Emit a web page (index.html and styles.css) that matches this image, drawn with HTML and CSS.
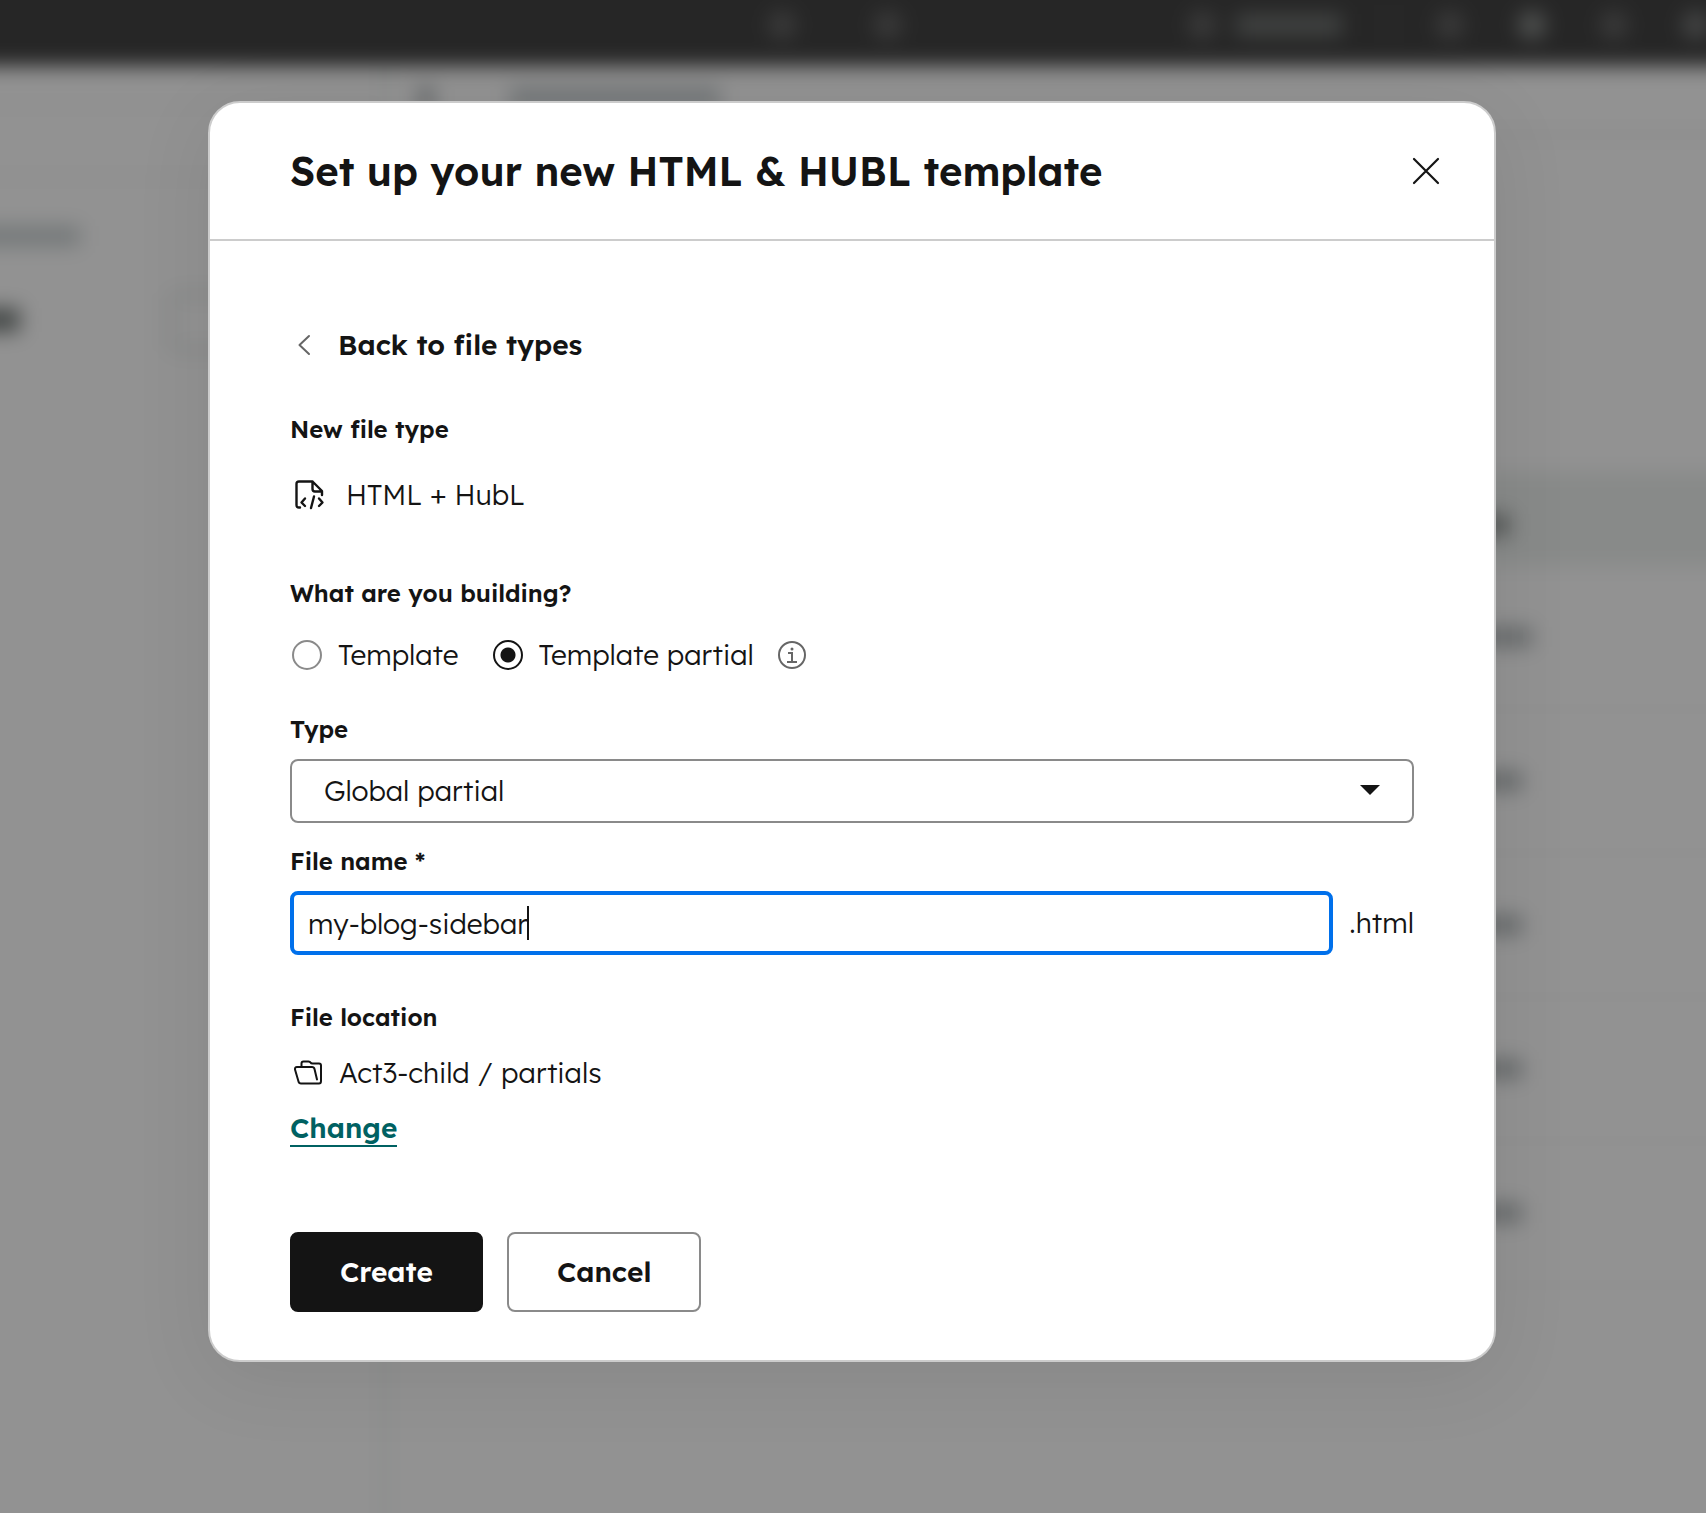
FILE: index.html
```
<!DOCTYPE html>
<html lang="en">
<head>
    <meta charset="UTF-8">
    <meta name="viewport" content="width=device-width, initial-scale=1.0">
    <title>Set up your new HTML &amp; HUBL template</title>
    <link rel="stylesheet" href="styles.css">
</head>

<body>
    <!-- design manager behind the dialog -->
    <div class="app" aria-hidden="true">
        <div class="topbar">
            <i class="dot dim search"></i>
            <i class="dot dim"></i>
            <i class="dot dim account"></i>
            <i class="bar"></i>
            <i class="divider"></i>
            <i class="dot dim"></i>
            <i class="dot light"></i>
            <i class="dot dim"></i>
            <i class="dot"></i>
        </div>
        <div class="workspace">
            <div class="sidebar">
                <div class="side-row"></div>
                <div class="side-row"></div>
                <div class="side-link"><i></i></div>
                <div class="side-title"><i></i><b></b></div>
            </div>
            <div class="main">
                <div class="tabs"><i></i><b></b></div>
                <div class="table">
                    <div class="row head"><i></i></div>
                    <div class="row first"><i></i></div>
                    <div class="row"><i></i></div>
                    <div class="row"><i></i></div>
                    <div class="row"><i></i></div>
                    <div class="row"><i></i></div>
                </div>
            </div>
        </div>
    </div>

    <div class="overlay">
        <div class="modal" role="dialog" aria-labelledby="modalTitle">
            <div class="modal-header">
                <h1 id="modalTitle">Set up your new HTML &amp; HUBL template</h1>
                <button type="button" class="close" aria-label="Close">
                    <svg width="28" height="28" viewBox="0 0 28 28" fill="none" stroke="#141414" stroke-width="2.2" stroke-linecap="round">
                        <path d="M2 2l24 24M26 2L2 26"/>
                    </svg>
                </button>
            </div>

            <form class="modal-body" onsubmit="return false">
                <button type="button" class="back">
                    <svg width="28" height="28" viewBox="0 0 28 28" fill="none" stroke="#666" stroke-width="2" stroke-linecap="round" stroke-linejoin="round">
                        <path d="M19 5L9.500 14L19 23"/>
                    </svg>
                    Back to file types
                </button>

                <h2 class="label">New file type</h2>
                <div class="file-type">
                    <svg width="32" height="32" viewBox="0 0 32 32" fill="none" stroke="#141414" stroke-width="2.400" stroke-linecap="round" stroke-linejoin="round">
                        <path d="M6 28.500H5Q2.500 28.500 2.500 26V5Q2.500 2.500 5 2.500H18.500L28 12V16M18.500 2.500V10Q18.500 12.500 21 12.500H28"/>
                        <path d="M11 19.500L7.500 23.500L11 27M20 17.500L17 29M25 19.500L28.500 23.500L25 27"/>
                    </svg>
                    HTML + HubL
                </div>

                <fieldset>
                    <legend class="label">What are you building?</legend>
                    <div class="radios">
                        <label><input type="radio" name="building" value="template"> Template</label>
                        <label><input type="radio" name="building" value="partial" checked> Template partial</label>
                        <svg class="info" width="28" height="28" viewBox="0 0 28 28" fill="none" stroke="#666" stroke-width="2">
                            <circle cx="14" cy="14" r="13"/>
                            <path d="M10 12H14V21M9 21H19"/>
                            <circle cx="14" cy="8" r="1.500" fill="#666" stroke="none"/>
                        </svg>
                    </div>
                </fieldset>

                <label class="label" for="type">Type</label>
                <div class="select">
                    <select id="type">
                        <option>Global partial</option>
                    </select>
                    <svg width="20" height="10" viewBox="0 0 20 10"><path d="M0 0H20L10 10Z" fill="#141414"/></svg>
                </div>

                <label class="label" for="fileName">File name *</label>
                <div class="file-name">
                    <div class="field">
                        <input type="text" id="fileName" value="my-blog-sidebar">
                        <span class="caret"></span>
                    </div>
                    <span>.html</span>
                </div>

                <h2 class="label location">File location</h2>
                <div class="path">
                    <svg width="29" height="28" viewBox="0 0 29 28" fill="none" stroke="#141414" stroke-width="2" stroke-linecap="round" stroke-linejoin="round">
                        <path d="M7.500 8V4.500Q7.500 2.500 9.500 2.500H14.500Q16 2.500 16.500 3.500T18.500 4.500H25Q27 4.500 27 6.500V22Q27 24.500 25 24.500H7Q5 24.500 4.500 22.500L1 10.500Q0.800 8 3 8H18Q20 8 20.500 10L23 20.500"/>
                    </svg>
                    Act3-child / partials
                </div>
                <a href="#" class="change">Change</a>

                <div class="buttons">
                    <button type="submit" class="btn primary">Create</button>
                    <button type="button" class="btn">Cancel</button>
                </div>
            </form>
        </div>
    </div>
</body>
</html>
```
FILE: styles.css
```
* {
    box-sizing: border-box;
}

body {
    margin: 0;
    min-height: 100vh;
    position: relative;
    overflow-x: hidden;
    background: #929292;
    color: #141414;
    font-family: Lexend, Inter, sans-serif;
    font-feature-settings: "cv11";
    font-size: 28px;
    font-weight: 300;
    line-height: 40px;
}

h1, h2, fieldset, legend {
    margin: 0;
    padding: 0;
    border: 0;
}

svg {
    display: block;
    flex: none;
}

button, input, select {
    font: inherit;
    font-feature-settings: inherit;
    color: inherit;
}

/* page behind the dialog */
.app {
    position: absolute;
    inset: 0;
    overflow: hidden;
    filter: blur(10px);
    margin: -40px;
    background: linear-gradient(#262626 106px, #929292 106px);
}

.topbar {
    height: 106px;
    padding: 40px 36px 16px 0;
    display: flex;
    align-items: center;
    justify-content: flex-end;
    gap: 54px;
}

.dot {
    width: 28px;
    height: 28px;
    border-radius: 50%;
    background: #454646;
    flex: none;
}

.dot.dim {
    background: #3b3b3b;
}

.dot.light {
    background: #505251;
}

.dot.search {
    margin-right: 24px;
}

.dot.account {
    margin: 0 -34px 0 232px;
}

.bar {
    width: 106px;
    height: 22px;
    background: #414342;
}

.divider {
    width: 2px;
    height: 40px;
    margin: 0 -8px 0 -8px;
    background: #393939;
}

.workspace {
    display: grid;
    grid-template-columns: 426px 1fr;
    min-height: 100%;
}

.sidebar {
    border-right: 3px solid #828584;
}

.side-row {
    height: 40px;
    border-bottom: 2px solid #868686;
}

.side-row + .side-row {
    height: 72px;
}

.side-link {
    padding: 48px 0 46px;
}

.side-link i {
    display: block;
    width: 120px;
    height: 20px;
    background: #747879;
}

.side-title {
    display: flex;
    justify-content: space-between;
}

.side-title i {
    width: 60px;
    height: 24px;
    margin-top: 16px;
    background: #454948;
}

.side-title b {
    width: 214px;
    height: 60px;
    border: 4px solid #7c807f;
    border-radius: 8px;
}

.tabs {
    height: 70px;
    padding: 22px 32px;
    display: flex;
    gap: 76px;
    border-bottom: 3px solid #848484;
}

.tabs i {
    width: 16px;
    height: 20px;
    background: #606466;
}

.tabs b {
    width: 210px;
    height: 20px;
    background: #707476;
}

.table {
    margin-top: 336px;
}

.row {
    height: 144px;
    padding-left: 1042px;
    display: flex;
    align-items: center;
    border-bottom: 2px solid #8b8b8b;
}

.row i {
    width: 94px;
    height: 20px;
    background: #686b6c;
}

.row.first i {
    width: 104px;
}

.row.head {
    height: 94px;
    background: #888a89;
    border: 0;
}

.row.head i {
    width: 82px;
    height: 22px;
    margin-top: 12px;
    background: #555857;
}

/* dialog */
.overlay {
    position: relative;
    padding: 101px 210px 152px 208px;
}

.modal {
    background: #fff;
    border: 2px solid #ccc;
    border-radius: 32px;
    box-shadow: 0 16px 80px rgba(0, 0, 0, 0.08);
}

.modal-header {
    height: 138px;
    padding: 0 54px 0 80px;
    display: flex;
    align-items: center;
    justify-content: space-between;
    border-bottom: 2px solid #ccc;
}

h1 {
    font-size: 40px;
    font-weight: 600;
    line-height: 48px;
}

.close {
    padding: 0;
    border: 0;
    background: none;
}

.modal-body {
    padding: 84px 80px 48px;
}

.back {
    display: flex;
    align-items: center;
    gap: 20px;
    margin-bottom: 46px;
    padding: 0;
    border: 0;
    background: none;
    font-weight: 600;
}

.label {
    display: block;
    font-size: 24px;
    font-weight: 600;
    line-height: 36px;
}

.file-type {
    display: flex;
    align-items: center;
    gap: 20px;
    padding-left: 4px;
    margin: 28px 0 60px;
}

.radios {
    display: flex;
    align-items: center;
    margin: 24px 0 36px;
}

.radios label {
    display: flex;
    align-items: center;
    gap: 16px;
    margin-right: 32px;
}

.radios label + label {
    margin-right: 24px;
}

.radios input {
    appearance: none;
    width: 30px;
    height: 30px;
    margin: 0 0 0 2px;
    border: 2px solid #8a8a8a;
    border-radius: 50%;
}

.radios input:checked {
    border-color: #141414;
    background: radial-gradient(circle, #141414 7px, transparent 8px);
}

.select {
    position: relative;
    margin: 12px 0 20px;
}

.select select {
    appearance: none;
    display: block;
    width: 100%;
    height: 64px;
    padding: 0 32px;
    border: 2px solid #8a8a8a;
    border-radius: 8px;
    background: #fff;
}

.select svg {
    position: absolute;
    right: 34px;
    top: 26px;
}

.file-name {
    display: flex;
    align-items: center;
    gap: 16px;
    margin-top: 12px;
}

.field {
    position: relative;
    flex: 1;
}

.field input {
    display: block;
    width: 100%;
    height: 64px;
    padding: 0 14px;
    border: 4px solid #0070eb;
    border-radius: 8px;
    outline: none;
    background: #fff;
}

.caret {
    position: absolute;
    left: 237px;
    top: 15px;
    width: 2px;
    height: 34px;
    background: #141414;
}

.location {
    margin-top: 44px;
}

.path {
    display: flex;
    align-items: center;
    gap: 16px;
    padding-left: 4px;
    margin: 18px 0;
}

.change {
    display: block;
    width: fit-content;
    border-bottom: 2px solid #006162;
    color: #006162;
    font-weight: 600;
    line-height: 34px;
    text-decoration: none;
}

.buttons {
    display: flex;
    gap: 24px;
    margin-top: 85px;
}

.btn {
    height: 80px;
    padding: 0 48px;
    border: 2px solid #8a8a8a;
    border-radius: 8px;
    background: #fff;
    font-weight: 600;
}

.btn.primary {
    border-color: #141414;
    background: #141414;
    color: #fff;
}
```
